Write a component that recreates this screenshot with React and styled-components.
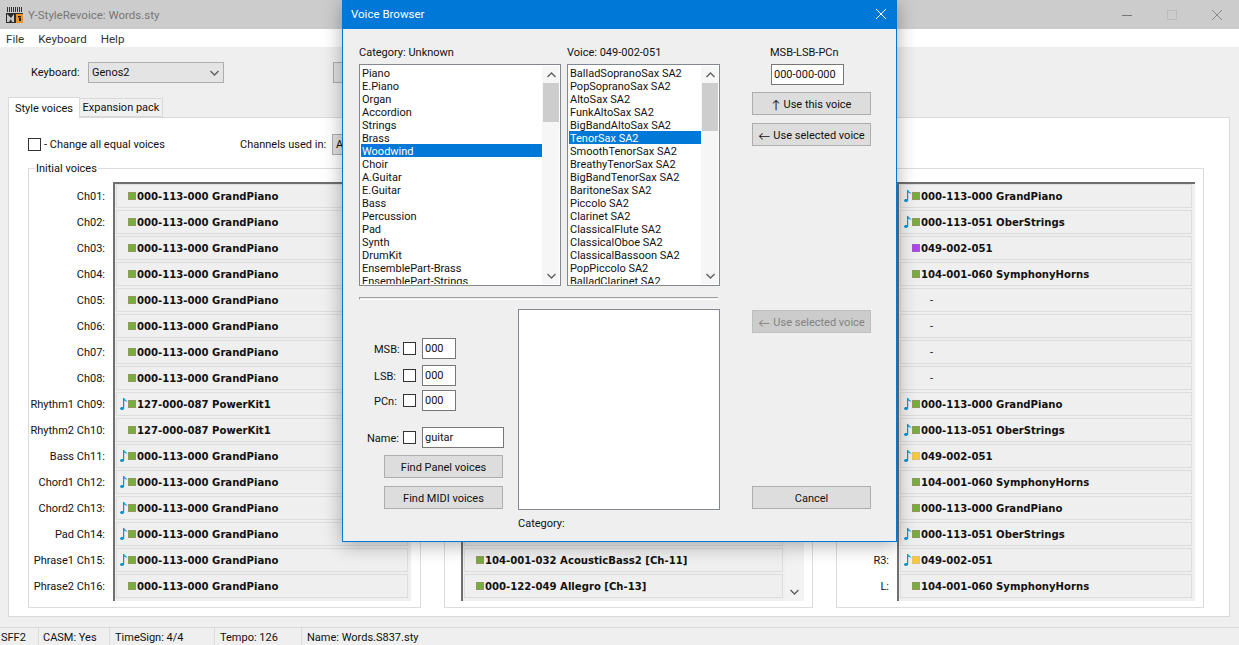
import React from 'react'
import styled, { createGlobalStyle } from 'styled-components'

const GlobalStyle = createGlobalStyle`
  html, body {
    margin: 0;
    padding: 0;
    overflow: hidden;
    background: #efefef;
  }
  * {
    box-sizing: border-box;
  }
  body, input {
    font-family: Roboto, 'Open Sans', sans-serif;
    font-size: 11px;
    color: #111;
  }
`

const categories = [
  'Piano', 'E.Piano', 'Organ', 'Accordion', 'Strings', 'Brass', 'Woodwind', 'Choir', 'A.Guitar',
  'E.Guitar', 'Bass', 'Percussion', 'Pad', 'Synth', 'DrumKit', 'EnsemblePart-Brass', 'EnsemblePart-Strings',
]

const voices = [
  'BalladSopranoSax SA2', 'PopSopranoSax SA2', 'AltoSax SA2', 'FunkAltoSax SA2', 'BigBandAltoSax SA2',
  'TenorSax SA2', 'SmoothTenorSax SA2', 'BreathyTenorSax SA2', 'BigBandTenorSax SA2', 'BaritoneSax SA2',
  'Piccolo SA2', 'Clarinet SA2', 'ClassicalFlute SA2', 'ClassicalOboe SA2', 'ClassicalBassoon SA2',
  'PopPiccolo SA2', 'BalladClarinet SA2',
]

const piano = '000-113-000 GrandPiano'
const kit = '127-000-087 PowerKit1'
const ober = '000-113-051 OberStrings'
const horns = '104-001-060 SymphonyHorns'
const sax = '049-002-051'

const initialVoices = [
  { label: 'Ch01:', text: piano, color: 'green' },
  { label: 'Ch02:', text: piano, color: 'green' },
  { label: 'Ch03:', text: piano, color: 'green' },
  { label: 'Ch04:', text: piano, color: 'green' },
  { label: 'Ch05:', text: piano, color: 'green' },
  { label: 'Ch06:', text: piano, color: 'green' },
  { label: 'Ch07:', text: piano, color: 'green' },
  { label: 'Ch08:', text: piano, color: 'green' },
  { label: 'Rhythm1 Ch09:', text: kit, color: 'green', note: true },
  { label: 'Rhythm2 Ch10:', text: kit, color: 'green' },
  { label: 'Bass Ch11:', text: piano, color: 'green', note: true },
  { label: 'Chord1 Ch12:', text: piano, color: 'green', note: true },
  { label: 'Chord2 Ch13:', text: piano, color: 'green', note: true },
  { label: 'Pad Ch14:', text: piano, color: 'green', note: true },
  { label: 'Phrase1 Ch15:', text: piano, color: 'green', note: true },
  { label: 'Phrase2 Ch16:', text: piano, color: 'green' },
]

const middleVoices = [
  ...Array.from({ length: 14 }, () => ({})),
  { text: '104-001-032 AcousticBass2 [Ch-11]', color: 'green' },
  { text: '000-122-049 Allegro [Ch-13]', color: 'green' },
]

const rightVoices = [
  { text: piano, color: 'green', note: true },
  { text: ober, color: 'green', note: true },
  { text: sax, color: 'purple' },
  { text: horns, color: 'green' },
  { dash: true },
  { dash: true },
  { dash: true },
  { dash: true },
  { text: piano, color: 'green', note: true },
  { text: ober, color: 'green', note: true },
  { text: sax, color: 'yellow', note: true },
  { text: horns, color: 'green' },
  { text: piano, color: 'green' },
  { text: ober, color: 'green', note: true },
  { label: 'R3:', text: sax, color: 'yellow', note: true },
  { label: 'L:', text: horns, color: 'green' },
]

const swatches = {
  green: { fill: '#78ad3e', edge: '#8f9a5c' },
  purple: { fill: '#b63ff0', edge: '#9a62c0' },
  yellow: { fill: '#f7c93e', edge: '#e0c070' },
}

const MainWindow = styled.div`
  position: relative;
  display: flex;
  flex-direction: column;
  width: 1239px;
  height: 645px;
  background: #efefef;
  overflow: hidden;
`

const TitleBar = styled.div`
  display: flex;
  align-items: center;
  height: 29px;
  flex: none;
  background: #cccccc;
  padding-left: 6px;
  color: #777;
  font-size: 11.5px;
`

const TitleText = styled.span`
  margin-left: 5px;
  flex: 1;
`

const WinButton = styled.div`
  display: flex;
  align-items: center;
  justify-content: center;
  width: 45px;
  height: 29px;
`

const MenuBar = styled.div`
  display: flex;
  gap: 14px;
  height: 18px;
  flex: none;
  align-items: center;
  padding: 1px 0 0 6px;
  background: #fff;
  color: #333;
  font-size: 11.6px;
`

const ToolRow = styled.div`
  display: flex;
  align-items: center;
  height: 21px;
  flex: none;
  margin-top: 15px;
  padding-left: 31px;
`

const ToolLabel = styled.span`
  width: 50px;
  flex: none;
`

const Combo = styled.div`
  display: flex;
  align-items: center;
  justify-content: space-between;
  width: 136px;
  height: 21px;
  margin-left: 7px;
  padding: 0 4px 0 3px;
  background: #e4e4e4;
  border: 1px solid #adadad;
`

const GhostButton = styled.div`
  width: 60px;
  height: 21px;
  margin-left: 109px;
  background: #e1e1e1;
  border: 1px solid #adadad;
`

const TabStrip = styled.div`
  display: flex;
  align-items: flex-end;
  height: 21px;
  flex: none;
  margin: 14px 0 -1px;
  padding-left: 8px;
  position: relative;
  z-index: 1;
`

const Tab = styled.div`
  display: flex;
  align-items: center;
  justify-content: center;
  white-space: nowrap;
  width: ${(p) => (p.$active ? '72px' : '83px')};
  height: ${(p) => (p.$active ? '21px' : '19px')};
  margin-bottom: ${(p) => (p.$active ? '0' : '1px')};
  background: ${(p) => (p.$active ? '#fff' : '#f0f0f0')};
  border: 1px solid #d9d9d9;
  border-bottom: ${(p) => (p.$active ? 'none' : '1px solid #d9d9d9')};
  border-left: ${(p) => (p.$active ? '1px solid #d9d9d9' : 'none')};
`

const Pane = styled.div`
  display: flex;
  flex-direction: column;
  width: 1222px;
  height: 500px;
  flex: none;
  margin-left: 8px;
  padding: 15px 0 0 19px;
  background: #fff;
  border: 1px solid #d9d9d9;
`

const PaneHeader = styled.div`
  display: flex;
  align-items: center;
  height: 22px;
  flex: none;
`

const CheckBox = styled.span`
  display: inline-block;
  width: 13px;
  height: 13px;
  flex: none;
  border: 1px solid #333;
  background: #fff;
`

const ChangeLabel = styled.span`
  margin: 1px 0 0 3px;
  width: 196px;
  flex: none;
`

const ChannelsCaption = styled.span`
  width: 85px;
  flex: none;
  margin-top: 1px;
  white-space: nowrap;
`

const ChannelSelect = styled.div`
  width: 60px;
  height: 21px;
  margin-left: 7px;
  padding-left: 3px;
  line-height: 19px;
  background: #e1e1e1;
  border: 1px solid #adadad;
`

const Groups = styled.div`
  display: flex;
  gap: 23px;
  margin-top: 13px;
  height: 440px;
`

const Group = styled.div`
  position: relative;
  display: flex;
  width: ${(p) => p.$width}px;
  height: 100%;
  flex: none;
  padding: 13px ${(p) => p.$pad}px 6px 0;
  border: 1px solid #dcdcdc;
`

const Legend = styled.span`
  position: absolute;
  top: -7px;
  left: 6px;
  padding: 0 1px;
  background: #fff;
`

const LabelColumn = styled.div`
  display: flex;
  flex-direction: column;
  gap: 2px;
  flex: none;
  width: ${(p) => p.$width}px;
  padding: 2px 8px 0 0;
`

const ChannelLabel = styled.div`
  display: flex;
  align-items: center;
  justify-content: flex-end;
  height: 24px;
  white-space: nowrap;
`

const SunkenArea = styled.div`
  display: flex;
  flex: 1;
  min-width: 0;
  background: #efefef;
  border-top: 2px solid #6f6f6f;
  border-left: 2px solid #6f6f6f;
  padding-left: 1px;
  padding-right: ${(p) => (p.$scroll ? '0' : '3px')};
`

const RowColumn = styled.div`
  display: flex;
  flex-direction: column;
  gap: 2px;
  flex: 1;
  min-width: 0;
`

const VoiceRow = styled.div`
  display: flex;
  align-items: center;
  height: 24px;
  flex: none;
  padding-left: 3px;
  border: 1px solid #dcdcdc;
  font-family: 'DejaVu Sans', sans-serif;
  font-weight: 700;
  font-size: 10.1px;
  white-space: nowrap;
`

const NoteSlot = styled.span`
  display: flex;
  width: 8px;
  flex: none;
`

const Swatch = styled.span`
  width: 8px;
  height: 8px;
  flex: none;
  margin-right: 1px;
  background: ${(p) => swatches[p.$color].fill};
  border: 1px solid ${(p) => swatches[p.$color].edge};
`

const Dash = styled.span`
  margin-left: 18px;
  font-family: Roboto, sans-serif;
  font-weight: 400;
  font-size: 11px;
`

const AreaScrollBar = styled.div`
  display: flex;
  align-items: flex-end;
  justify-content: center;
  width: 19px;
  margin-left: 2px;
  padding-bottom: 6px;
  background: #f2f2f2;
`

const StatusBar = styled.div`
  display: flex;
  flex: 1;
  align-items: center;
  margin-top: 10px;
  border-top: 1px solid #dcdcdc;
`

const StatusCell = styled.div`
  display: flex;
  align-items: center;
  height: 100%;
  width: ${(p) => p.$width}px;
  flex: none;
  padding: 2px 0 0 ${(p) => p.$pad}px;
  border-right: ${(p) => (p.$last ? 'none' : '1px solid #dcdcdc')};
`

const Dialog = styled.div`
  position: absolute;
  top: 0;
  left: 342px;
  width: 555px;
  height: 542px;
  display: flex;
  flex-direction: column;
  background: #efefef;
  border: 1px solid #0078d7;
  border-top: none;
  box-shadow: 0 3px 18px rgba(0, 0, 0, 0.32);
`

const DialogTitle = styled.div`
  display: flex;
  align-items: center;
  justify-content: space-between;
  height: 29px;
  flex: none;
  padding: 0 10px 2px 8px;
  background: #0078d7;
  color: #fff;
  font-size: 11.5px;
`

const TopSection = styled.div`
  display: grid;
  grid-template-columns: 202px 153px 119px;
  column-gap: 6px;
  padding: 17px 0 0 16px;
`

const Column = styled.div`
  display: flex;
  flex-direction: column;
  min-width: 0;
`

const ActionColumn = styled(Column)`
  margin-left: 26px;
  width: 119px;
`

const FieldCaption = styled.div`
  height: 18px;
  line-height: 14px;
  margin-left: ${(p) => p.$indent || 0}px;
  white-space: nowrap;
`

const ListBox = styled.div`
  display: flex;
  height: 222px;
  padding: 1px;
  background: #fff;
  border: 1px solid #828790;
  overflow: hidden;
`

const ListItems = styled.div`
  flex: 1;
  min-width: 0;
  overflow: hidden;
`

const ListItem = styled.div`
  height: 13px;
  line-height: 15px;
  padding-left: 1px;
  white-space: nowrap;
  background: ${(p) => (p.$selected ? '#0078d7' : 'transparent')};
  color: ${(p) => (p.$selected ? '#fff' : '#111')};
`

const ScrollTrack = styled.div`
  display: flex;
  flex-direction: column;
  width: 17px;
  flex: none;
  padding-left: 1px;
  background: #f6f6f6;
`

const ScrollArrow = styled.div`
  display: flex;
  align-items: center;
  justify-content: center;
  height: 17px;
  flex: none;
`

const ScrollThumb = styled.div`
  height: ${(p) => p.$height}px;
  flex: none;
  background: #cdcdcd;
`

const ScrollGap = styled.div`
  flex: 1;
`

const TextInput = styled.input`
  display: block;
  width: ${(p) => p.$width}px;
  height: 21px;
  margin: 0;
  margin-left: ${(p) => p.$indent || 0}px;
  padding: 0 2px;
  background: #fff;
  border: 1px solid #777;
  border-radius: 0;
  outline: none;
  font-family: inherit;
  font-size: inherit;
  color: #111;
`

const ActionButton = styled.div`
  display: flex;
  align-items: center;
  justify-content: center;
  gap: 3px;
  width: 119px;
  height: 23px;
  flex: none;
  padding-top: 1px;
  margin-top: ${(p) => p.$top || 0}px;
  margin-left: ${(p) => p.$indent || 0}px;
  background: ${(p) => (p.$disabled ? '#cccccc' : '#dddddd')};
  border: 1px solid ${(p) => (p.$disabled ? '#bfbfbf' : '#adadad')};
  color: ${(p) => (p.$disabled ? '#838383' : '#111')};
  white-space: nowrap;
`

const ArrowGlyph = styled.span`
  font-family: Lato, sans-serif;
  font-size: 12px;
`

const Separator = styled.div`
  width: 359px;
  height: 3px;
  flex: none;
  margin: 11px 0 9px 16px;
  border-top: 1px solid #a0a0a0;
  border-left: 1px solid #a0a0a0;
  border-bottom: 1px solid #fff;
`

const BottomSection = styled.div`
  display: grid;
  grid-template-columns: 159px 202px 119px;
  padding-left: 16px;
  align-items: start;
`

const SearchColumn = styled(Column)`
  padding-top: 29px;
`

const FieldRow = styled.div`
  display: flex;
  align-items: center;
  height: 21px;
  flex: none;
  margin-top: ${(p) => p.$top || 0}px;
  padding-left: ${(p) => p.$pad}px;
`

const FieldLabel = styled.span`
  flex: 1;
  padding-top: 1px;
`

const FieldCheck = styled(CheckBox)`
  margin-right: 6px;
`

const FieldInput = styled(TextInput)`
  margin-right: ${(p) => p.$end}px;
`

const ResultBox = styled.div`
  height: 201px;
  background: #fff;
  border: 1px solid #828790;
`

const ResultCaption = styled.div`
  margin-top: 7px;
`

const SideColumn = styled(Column)`
  justify-content: space-between;
  height: 201px;
  margin-left: 32px;
  padding: 1px 0;
`

const ControlGlyph = ({ kind, color }) => (
  <svg width="10" height="10" viewBox="0 0 10 10" fill="none" stroke={color} strokeWidth="1">
    {kind === 'min' && <path d="M0 5.5h10" />}
    {kind === 'max' && <rect x="0.5" y="0.5" width="9" height="9" />}
    {kind === 'close' && <path d="M0 0l10 10M10 0L0 10" />}
  </svg>
)

const AppIcon = () => (
  <svg width="17" height="16" viewBox="0 0 17 16">
    <path d="M1 0h1v5H1zM3 0h1v5H3zM5 0h1v5H5zM7 0h1v5H7zM9 0h1v5H9zM11 0h1v5h-1zM13 0h1v5h-1zM15 0h1v5h-1z" fill="#333" />
    <rect x="0" y="6" width="17" height="10" fill="#2c2c2c" />
    <path d="M1 7l4 4 3-4v8H6l-1-3-2 3H1z" fill="#c9c9c9" />
    <rect x="10" y="7" width="7" height="9" fill="#e8952f" />
    <path d="M12 9h3v1.500h-3zM13 11h2v3h-2z" fill="#1d1d1d" />
  </svg>
)

const Chevron = ({ up, color = '#606060' }) => (
  <svg width="9" height="6" viewBox="0 0 9 6" fill="none" stroke={color} strokeWidth="1.4">
    <path d={up ? 'M0.5 5L4.500 1L8.500 5' : 'M0.500 1L4.500 5L8.500 1'} />
  </svg>
)

const NoteIcon = () => (
  <svg width="8" height="12" viewBox="0 0 8 12">
    <path d="M3 0h1.200v10.200C4.200 11.300 3 12 1.800 12 .7 12 0 11.400 0 10.600 0 9.700 1 9 2 9c.4 0 .8.100 1 .2z" fill="#0a94d6" />
    <path d="M4.200 0c.3 1.600 3 2 3.300 4.500C6.800 3.400 5.400 3 4.200 2.700z" fill="#0a94d6" />
  </svg>
)

function Row({ row }) {
  return (
    <VoiceRow>
      <NoteSlot>{row.note && <NoteIcon />}</NoteSlot>
      {row.color && <Swatch $color={row.color} />}
      {row.text && <span>{row.text}</span>}
      {row.dash && <Dash>-</Dash>}
    </VoiceRow>
  )
}

function VoiceGroup({ rows, width, pad, labelWidth, legend, scroll }) {
  return (
    <Group $width={width} $pad={pad}>
      {legend && <Legend>{legend}</Legend>}
      <LabelColumn $width={labelWidth}>
        {rows.map((row, index) => (
          <ChannelLabel key={index}>{row.label}</ChannelLabel>
        ))}
      </LabelColumn>
      <SunkenArea $scroll={scroll}>
        <RowColumn>
          {rows.map((row, index) => (
            <Row key={index} row={row} />
          ))}
        </RowColumn>
        {scroll && (
          <AreaScrollBar>
            <Chevron />
          </AreaScrollBar>
        )}
      </SunkenArea>
    </Group>
  )
}

function PickList({ items, selected, thumbHeight }) {
  return (
    <ListBox>
      <ListItems>
        {items.map((item) => (
          <ListItem key={item} $selected={item === selected}>
            {item}
          </ListItem>
        ))}
      </ListItems>
      <ScrollTrack>
        <ScrollArrow>
          <Chevron up />
        </ScrollArrow>
        <ScrollThumb $height={thumbHeight} />
        <ScrollGap />
        <ScrollArrow>
          <Chevron />
        </ScrollArrow>
      </ScrollTrack>
    </ListBox>
  )
}

function SearchField({ label, pad, top, value, width }) {
  return (
    <FieldRow $pad={pad} $top={top}>
      <FieldLabel>{label}</FieldLabel>
      <FieldCheck />
      <FieldInput $width={width} $end={159 - 63 - width} defaultValue={value} readOnly />
    </FieldRow>
  )
}

function VoiceBrowser() {
  return (
    <Dialog>
      <DialogTitle>
        <span>Voice Browser</span>
        <ControlGlyph kind="close" color="#fff" />
      </DialogTitle>
      <TopSection>
        <Column>
          <FieldCaption>Category: Unknown</FieldCaption>
          <PickList items={categories} selected="Woodwind" thumbHeight={39} />
        </Column>
        <Column>
          <FieldCaption>Voice: 049-002-051</FieldCaption>
          <PickList items={voices} selected="TenorSax SA2" thumbHeight={48} />
        </Column>
        <ActionColumn>
          <FieldCaption $indent={18}>MSB-LSB-PCn</FieldCaption>
          <TextInput $width={73} $indent={19} defaultValue="000-000-000" readOnly />
          <ActionButton $top={7}><ArrowGlyph>↑</ArrowGlyph>Use this voice</ActionButton>
          <ActionButton $top={8}><ArrowGlyph>←</ArrowGlyph>Use selected voice</ActionButton>
        </ActionColumn>
      </TopSection>
      <Separator />
      <BottomSection>
        <SearchColumn>
          <SearchField label="MSB:" pad={15} value="000" width={34} />
          <SearchField label="LSB:" pad={15} top={6} value="000" width={34} />
          <SearchField label="PCn:" pad={15} top={4} value="000" width={34} />
          <SearchField label="Name:" pad={8} top={16} value="guitar" width={82} />
          <ActionButton $top={7} $indent={25}>Find Panel voices</ActionButton>
          <ActionButton $top={8} $indent={25}>Find MIDI voices</ActionButton>
        </SearchColumn>
        <Column>
          <ResultBox />
          <ResultCaption>Category:</ResultCaption>
        </Column>
        <SideColumn>
          <ActionButton $disabled><ArrowGlyph>←</ArrowGlyph>Use selected voice</ActionButton>
          <ActionButton>Cancel</ActionButton>
        </SideColumn>
      </BottomSection>
    </Dialog>
  )
}

export default function App() {
  return (
    <>
      <GlobalStyle />
      <MainWindow>
        <TitleBar>
          <AppIcon />
          <TitleText>Y-StyleRevoice: Words.sty</TitleText>
          <WinButton><ControlGlyph kind="min" color="#777" /></WinButton>
          <WinButton><ControlGlyph kind="max" color="#bbb" /></WinButton>
          <WinButton><ControlGlyph kind="close" color="#888" /></WinButton>
        </TitleBar>
        <MenuBar>
          <span>File</span>
          <span>Keyboard</span>
          <span>Help</span>
        </MenuBar>
        <ToolRow>
          <ToolLabel>Keyboard:</ToolLabel>
          <Combo>
            <span>Genos2</span>
            <Chevron />
          </Combo>
          <GhostButton />
        </ToolRow>
        <TabStrip>
          <Tab $active>Style voices</Tab>
          <Tab>Expansion pack</Tab>
        </TabStrip>
        <Pane>
          <PaneHeader>
            <CheckBox />
            <ChangeLabel>- Change all equal voices</ChangeLabel>
            <ChannelsCaption>Channels used in:</ChannelsCaption>
            <ChannelSelect>A</ChannelSelect>
          </PaneHeader>
          <Groups>
            <VoiceGroup rows={initialVoices} width={393} pad={9} labelWidth={84} legend="Initial voices" />
            <VoiceGroup rows={middleVoices} width={369} pad={8} labelWidth={16} scroll />
            <VoiceGroup rows={rightVoices} width={368} pad={8} labelWidth={60} />
          </Groups>
        </Pane>
        <StatusBar>
          <StatusCell $width={39} $pad={1}>SFF2</StatusCell>
          <StatusCell $width={71} $pad={4}>CASM: Yes</StatusCell>
          <StatusCell $width={105} $pad={5}>TimeSign: 4/4</StatusCell>
          <StatusCell $width={87} $pad={5}>Tempo: 126</StatusCell>
          <StatusCell $width={300} $pad={5} $last>Name: Words.S837.sty</StatusCell>
        </StatusBar>
        <VoiceBrowser />
      </MainWindow>
    </>
  )
}
